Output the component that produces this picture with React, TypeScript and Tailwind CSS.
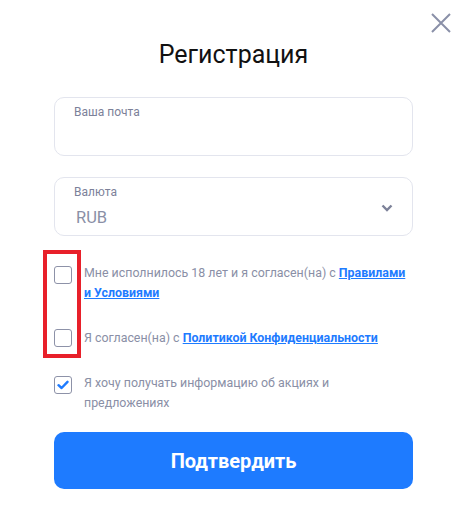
import React from "react";

function Box({ checked }: { checked?: boolean }) {
  return (
    <div className="w-[18px] h-[18px] shrink-0 rounded-[3px] border-[1.5px] border-[#8d92a8] bg-white flex items-center justify-center">
      {checked && (
        <svg width="12" height="10" viewBox="0 0 12 10">
          <path d="M1.5 5.2 L4.6 8 L10.5 1.8" fill="none" stroke="#1e7bff" strokeWidth="2.4" strokeLinecap="round" strokeLinejoin="round" />
        </svg>
      )}
    </div>
  );
}

export default function App() {
  return (
    <div className="w-[463px] h-[525px] bg-white relative overflow-hidden" style={{ fontFamily: "Roboto, 'Noto Sans', sans-serif" }}>
      <button className="absolute left-[430px] top-[12px] w-[22px] h-[22px]">
        <svg width="22" height="22" viewBox="0 0 22 22">
          <path d="M2 2 L20 20 M20 2 L2 20" stroke="#8a90a8" strokeWidth="2" />
        </svg>
      </button>
      <div className="pl-[54px] pr-[50px] pt-[40px]">
        <h1 className="text-[25px] leading-[30px] text-[#111] text-center">Регистрация</h1>
        <div className="mt-[27px] h-[59px] rounded-[10px] border border-[#e3e5ee] pl-[19px] pt-[6px]">
          <div className="text-[12px] leading-[16px] text-[#7c8199]">Ваша почта</div>
        </div>
        <div className="mt-[21px] h-[59px] rounded-[10px] border border-[#e3e5ee] pl-[19px] pr-[19px] pt-[6px] flex">
          <div className="flex-1">
            <div className="text-[12px] leading-[16px] text-[#7c8199]">Валюта</div>
            <div className="text-[16.5px] leading-[20px] mt-[8px] ml-[2px] text-[#8a8fa6]">RUB</div>
          </div>
          <svg className="mt-[20px]" width="12" height="8" viewBox="0 0 12 8">
            <path d="M1.5 1.5 L6 6 L10.5 1.5" fill="none" stroke="#7d8299" strokeWidth="2.4" />
          </svg>
        </div>
        <div className="relative mt-[29px]">
          <div className="absolute left-[-11px] top-[-15px] w-[38px] h-[108px] border-[4px] border-[#e8202a]" />
          <div className="flex gap-[12px]">
            <div className="pt-[1px]"><Box /></div>
            <div className="text-[12.4px] leading-[20px] text-[#8a8fa6] -mt-[2px]">
              Мне исполнилось 18 лет и я согласен(на) с{" "}
              <a className="text-[#1e7bff] font-bold underline">Правилами и Условиями</a>
            </div>
          </div>
          <div className="flex gap-[12px] mt-[25px] items-center">
            <Box />
            <div className="text-[12.4px] leading-[20px] text-[#8a8fa6]">
              Я согласен(на) с{" "}
              <a className="text-[#1e7bff] font-bold underline">Политикой Конфиденциальности</a>
            </div>
          </div>
          <div className="flex gap-[12px] mt-[27px]">
            <div className="pt-[1px]"><Box checked /></div>
            <div className="text-[12.4px] leading-[20px] text-[#8a8fa6] -mt-[2px]">
              Я хочу получать информацию об акциях и предложениях
            </div>
          </div>
        </div>
        <button className="mt-[19px] w-full h-[57px] rounded-[10px] bg-[#1e7bff] text-white text-[20px] font-bold">
          Подтвердить
        </button>
      </div>
    </div>
  );
}
